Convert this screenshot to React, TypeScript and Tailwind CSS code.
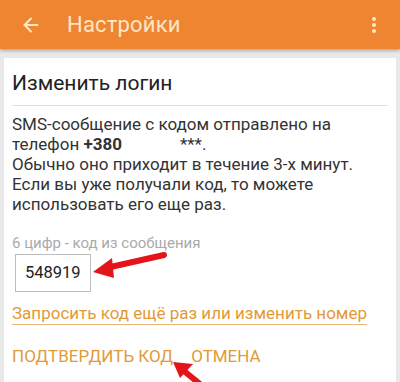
import { ArrowLeft } from 'lucide-react'

export default function App() {
  return (
    <div className="relative w-[400px] h-[382px] overflow-hidden bg-[#e9e9e9] font-['Roboto',sans-serif]">
      {/* Toolbar */}
      <div className="relative z-10 h-[49px] bg-[#ef8431] flex items-center shadow-[0_2px_3px_rgba(0,0,0,0.25)]">
        <ArrowLeft className="ml-[20px] w-[22px] h-[22px] text-[#fde6c6]" strokeWidth={2.2} />
        <span className="ml-[25px] text-[22px] text-[#fde6c6] tracking-[0.2px]">Настройки</span>
        <div className="ml-auto mr-[24px] flex flex-col gap-[2px] items-center">
          <span className="w-[4px] h-[4px] rounded-full bg-[#fde6c6]" />
          <span className="w-[4px] h-[4px] rounded-full bg-[#fde6c6]" />
          <span className="w-[4px] h-[4px] rounded-full bg-[#fde6c6]" />
        </div>
      </div>

      {/* Card */}
      <div className="mx-[4px] mt-[9px] bg-white px-[8px] pt-[11px] pb-[20px] h-[340px]">
        <h1 className="text-[21px] leading-[28px] text-[#222]">Изменить логин</h1>
        <div className="mt-[8px] h-px bg-[#dedede]" />
        <p className="mt-[8px] text-[17px] leading-[20px] text-[#333] whitespace-nowrap">
          SMS-сообщение с кодом отправлено на
          <br />
          телефон <b className="font-bold">+380</b>
          <span className="inline-block w-[58px]" />***.
          <br />
          Обычно оно приходит в течение 3-х минут.
          <br />
          Если вы уже получали код, то можете
          <br />
          использовать его еще раз.
        </p>

        <div className="mt-[20px] text-[15px] leading-[18px] text-[#aaa]">6 цифр - код из сообщения</div>
        <div className="mt-[2px] ml-[3px] w-[76px] h-[38px] border border-[#bdbdbd] flex items-center pl-[9px] text-[16.5px] text-[#222]">
          548919
        </div>

        <div className="mt-[11px] inline-block text-[17px] leading-[20px] text-[#e29a38] border-b border-[#e9b77a] pb-[1px]">
          Запросить код ещё раз или изменить номер
        </div>

        <div className="mt-[20px] flex gap-[18px] text-[17px] leading-[20px] text-[#e29a38]">
          <span>ПОДТВЕРДИТЬ КОД</span>
          <span>ОТМЕНА</span>
        </div>
      </div>

      {/* Annotation arrows */}
      <svg className="absolute left-0 top-0 pointer-events-none" width="400" height="382" viewBox="0 0 400 382">
        <line x1="164" y1="255" x2="106" y2="268" stroke="#e3151a" strokeWidth="6" strokeLinecap="round" />
        <polygon points="93,272 112,258 114,278" fill="#e3151a" />
        <line x1="200" y1="384" x2="184" y2="371" stroke="#e3151a" strokeWidth="6" strokeLinecap="round" />
        <polygon points="173,362 193,364 180,378" fill="#e3151a" />
      </svg>
    </div>
  )
}
